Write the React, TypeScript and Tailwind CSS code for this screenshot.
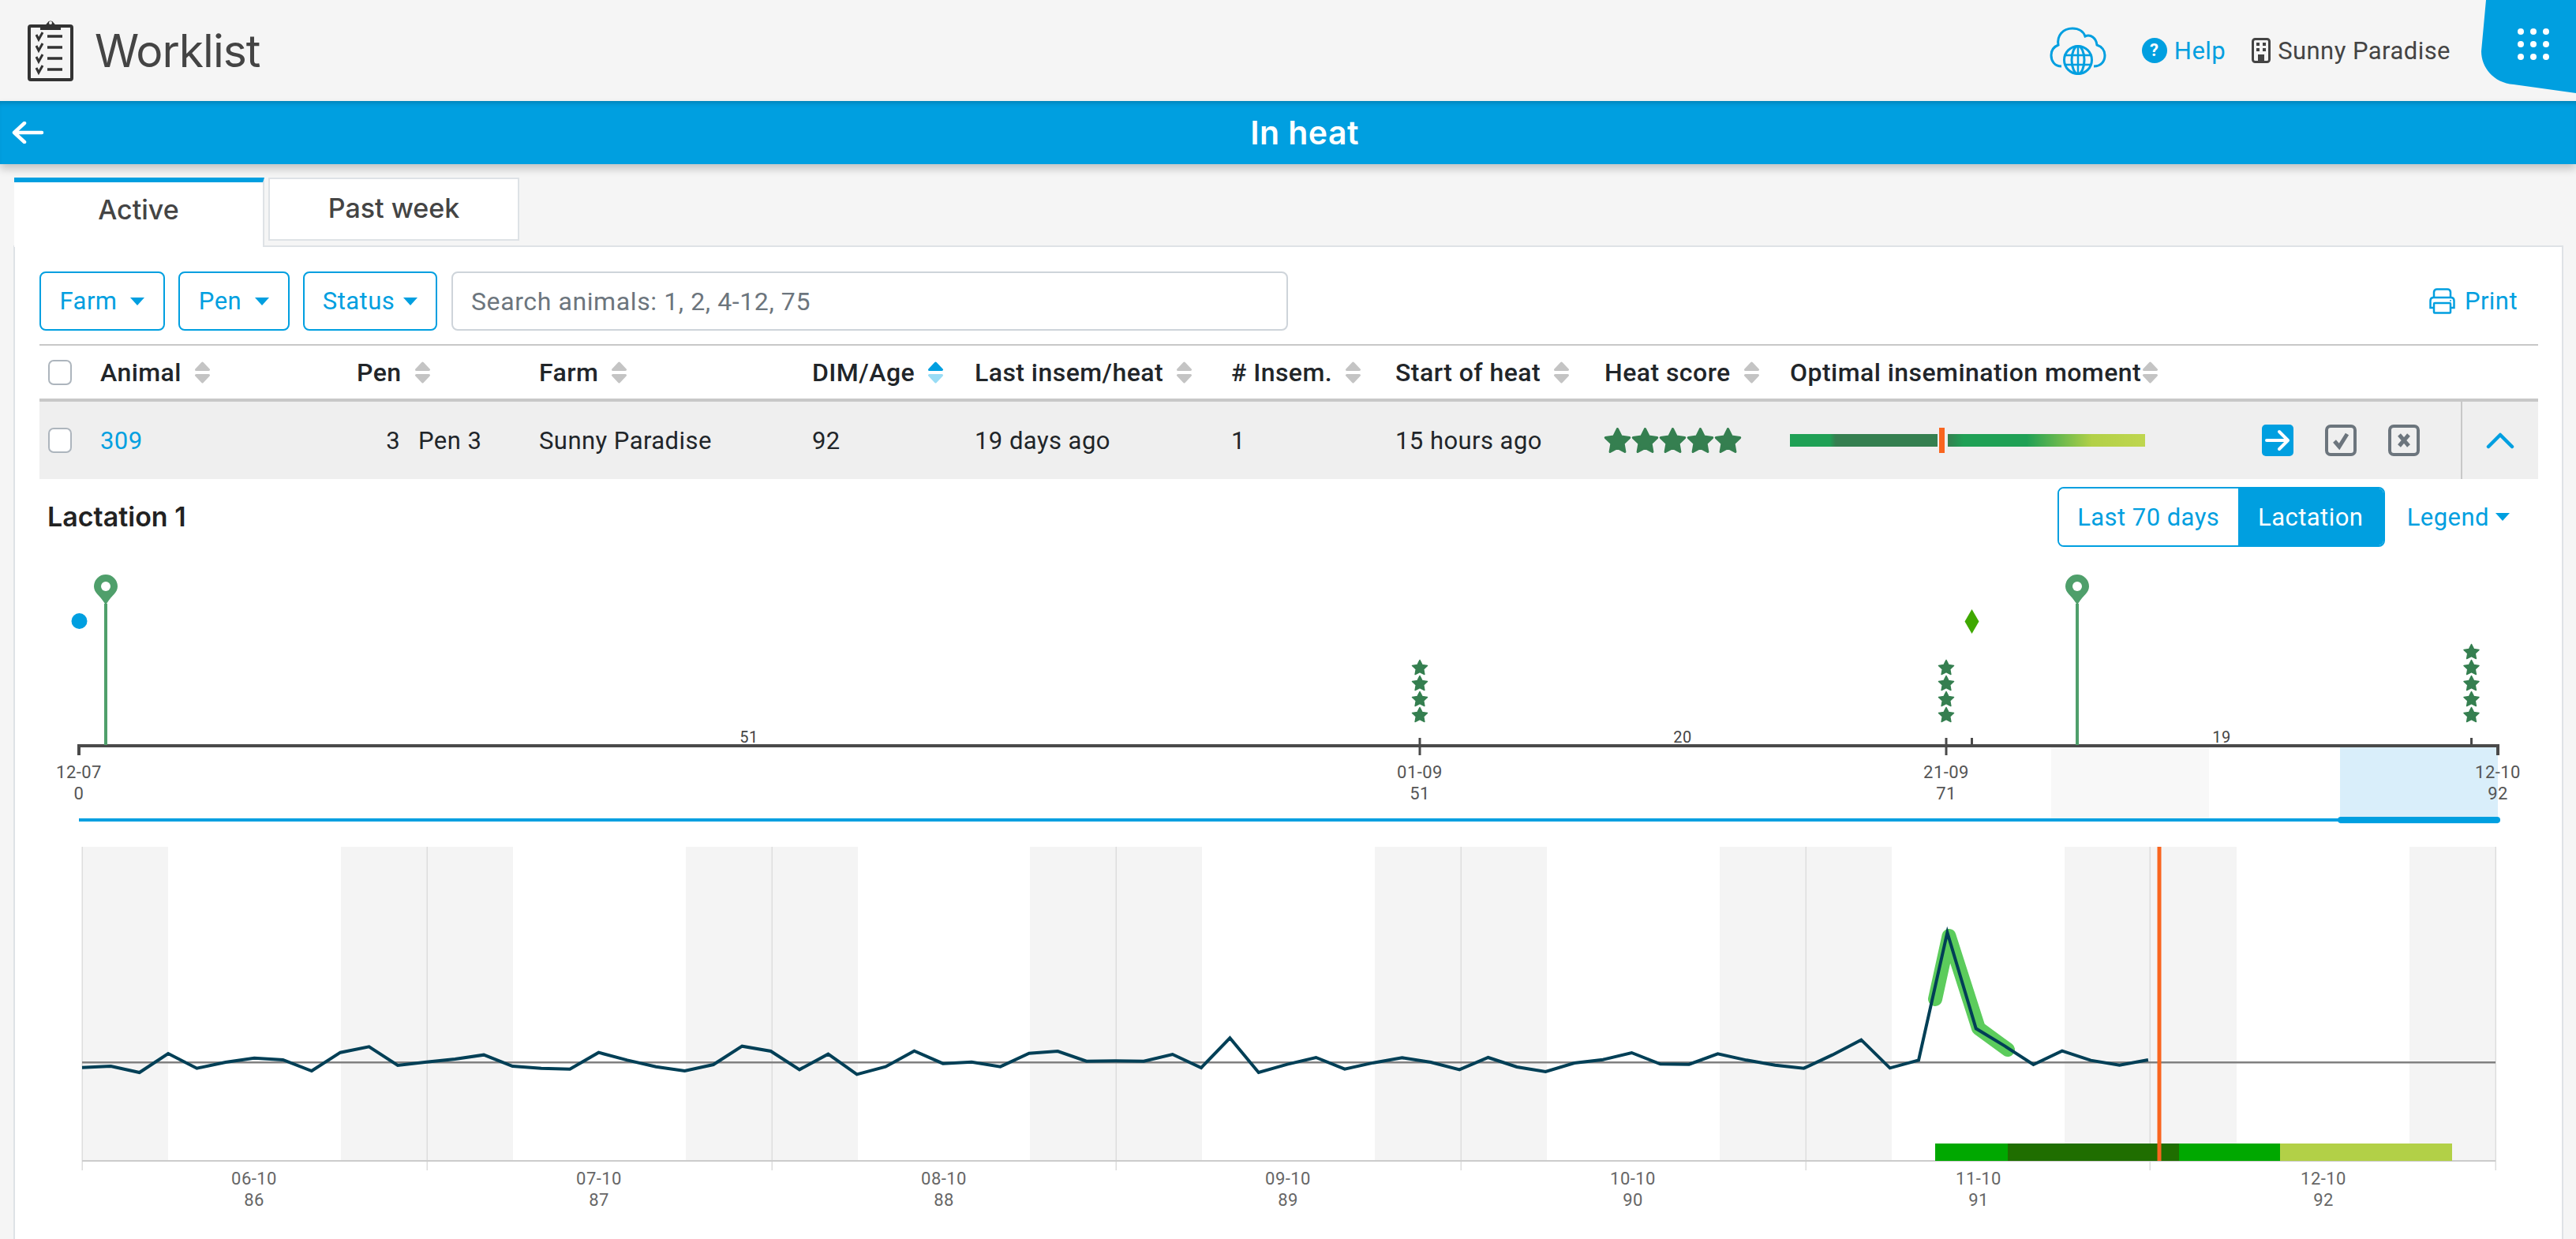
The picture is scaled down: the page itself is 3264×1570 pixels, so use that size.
const BLUE = "#009fe0";

// activity curve, one value per 2h, in page pixels
const curve = [
  878, 873, 897, 825, 881, 858, 842, 849, 891, 821, 799, 870, 857, 846, 830, 873, 881, 884, 821, 850, 875, 891, 867, 797,
  816, 886, 827, 904, 875, 815, 863, 857, 875, 824, 816, 854, 853, 854, 828, 879, 766, 897, 866, 840, 884, 860, 841, 858,
  886, 840, 876, 894, 861, 848, 822, 865, 866, 826, 850, 869, 881, 830, 773, 880, 850, 365, 730, 796, 867, 815, 851, 869,
  849,
].map((v, i) => `${104 + i * 36.36},${1060 + v / 3}`);

const dayLines = [104, 541, 978, 1414, 1851, 2288, 2724, 3162];
const nightBands = [
  [104, 213],
  [432, 650],
  [869, 1087],
  [1305, 1523],
  [1742, 1960],
  [2179, 2397],
  [2616, 2834],
  [3053, 3162],
];
const dayLabels = [
  ["06-10", "86", 322],
  ["07-10", "87", 759],
  ["08-10", "88", 1196],
  ["09-10", "89", 1632],
  ["10-10", "90", 2069],
  ["11-10", "91", 2507],
  ["12-10", "92", 2944],
] as const;

function starPoints(cx: number, cy: number, r: number) {
  const pts: string[] = [];
  for (let i = 0; i < 10; i++) {
    const rad = i % 2 === 0 ? r : r * 0.5;
    const a = -Math.PI / 2 + (i * Math.PI) / 5;
    pts.push(`${cx + rad * Math.cos(a)},${cy + rad * Math.sin(a)}`);
  }
  return pts.join(" ");
}

function StarColumn({ x, count }: { x: number; count: number }) {
  return (
    <>
      {Array.from({ length: count }).map((_, i) => (
        <polygon
          key={i}
          points={starPoints(x, 906.5 - i * 20, 10)}
          fill="#357f50"
          stroke="#357f50"
          strokeWidth="1.5"
          strokeLinejoin="round"
        />
      ))}
    </>
  );
}

function Pin({ x }: { x: number }) {
  return (
    <>
      <path
        d={`M${x} 767 C${x - 6} 755 ${x - 15} 752 ${x - 15} 743 A15 15 0 0 1 ${x + 15} 743 C${x + 15} 752 ${x + 6} 755 ${x} 767 Z`}
        fill="#4f9f6b"
      />
      <circle cx={x} cy="743" r="6" fill="white" />
      <rect x={x - 2} y="765" width="4" height="179" fill="#4f9f6b" />
    </>
  );
}

function SortIcon({ active }: { active?: boolean }) {
  return (
    <svg width="21" height="28" viewBox="0 0 21 28" className="shrink-0">
      <polygon
        points="10.5,2 18.5,10.5 2.5,10.5"
        fill={active ? BLUE : "#c4c4c4"}
        stroke={active ? BLUE : "#c4c4c4"}
        strokeWidth="3"
        strokeLinejoin="round"
      />
      <polygon
        points="2.5,17.5 18.5,17.5 10.5,26"
        fill={active ? "#99dcf5" : "#c4c4c4"}
        stroke={active ? "#99dcf5" : "#c4c4c4"}
        strokeWidth="3"
        strokeLinejoin="round"
      />
    </svg>
  );
}

function Caret() {
  return <span className="h-0 w-0 border-x-[9px] border-t-[10px] border-x-transparent border-t-[#009fe0]" />;
}

function Checkbox() {
  return <div className="ml-[11px] h-[32px] w-[30px] rounded-[7px] border-2 border-[#adb5bd] bg-white" />;
}

function HeaderCell({ label, gap = "gap-[16px]", active }: { label: string; gap?: string; active?: boolean }) {
  return (
    <div className={`flex items-center ${gap} text-[32px] font-medium text-[#212529]`}>
      <span>{label}</span>
      <SortIcon active={active} />
    </div>
  );
}

function FilterButton({ label, width, gap }: { label: string; width: string; gap: string }) {
  return (
    <button
      className={`flex h-full items-center justify-center ${width} ${gap} rounded-[8px] border-2 border-[#009fe0] bg-white text-[#009fe0]`}
    >
      {label}
      <Caret />
    </button>
  );
}

function ClipboardIcon() {
  return (
    <svg width="58" height="80" viewBox="0 0 58 80" className="shrink-0">
      <rect x="2" y="9" width="54" height="68" rx="2" fill="none" stroke="#333" strokeWidth="4" />
      <path d="M16 14 V9 H22 C23 7 24 6 25 5 A4.5 4.5 0 0 1 33 5 C34 6 35 7 36 9 H42 V14 Z" fill="#333" />
      <circle cx="29" cy="5" r="2" fill="#f5f5f5" />
      {[22, 36, 50, 64].map((y) => (
        <g key={y} fill="none" stroke="#333" strokeWidth="3">
          <path d={`M11 ${y - 2} L14 ${y + 4} L19 ${y - 5}`} />
          <path d={`M25 ${y} H44`} strokeWidth="3.5" />
        </g>
      ))}
    </svg>
  );
}

function CloudGlobe() {
  return (
    <svg width="72" height="61" viewBox="0 0 72 61" fill="none" stroke="#009fe0" strokeWidth="3">
      <path d="M15 50 C6 50 2 43 2 36 C2 29 6 25 11 23 C9 11 17 2 29 2 C37 2 43 6 45 12 C52 9 59 14 60 23 C66 25 70 30 70 36 C70 44 65 50 56 50" />
      <circle cx="36" cy="42" r="17.5" fill="#f5f5f5" />
      <ellipse cx="36" cy="42" rx="8" ry="17.5" />
      <path d="M36 24 V60 M19 36 H53 M19 48 H53" strokeWidth="2.5" />
    </svg>
  );
}

function BuildingIcon() {
  return (
    <svg width="24" height="32" viewBox="0 0 24 32">
      <rect x="1.5" y="1.5" width="21" height="29" rx="3" fill="none" stroke="#444" strokeWidth="3" />
      <path d="M6 6 H10 V10 H6 Z M14 6 H18 V10 H14 Z M6 13 H10 V17 H6 Z M14 13 H18 V17 H14 Z M8 21 H16 V30 H8 Z" fill="#444" />
    </svg>
  );
}

function PrinterIcon() {
  return (
    <svg width="33" height="33" viewBox="0 0 33 33" fill="none" stroke="#009fe0" strokeWidth="2.5">
      <path d="M6 12 V5 A4 4 0 0 1 10 1.5 H23 A4 4 0 0 1 27 5 V12" />
      <path d="M6 25 H1.5 V16 A4 4 0 0 1 5 12 H28 A4 4 0 0 1 31.5 16 V25 H27" />
      <rect x="6" y="19" width="21" height="12.5" rx="1" />
      <circle cx="27" cy="16" r="1" fill="#009fe0" stroke="none" />
    </svg>
  );
}

function ActionBox({ kind }: { kind: "go" | "check" | "close" }) {
  if (kind === "go") {
    return (
      <svg width="40" height="40" viewBox="0 0 40 40">
        <rect width="40" height="40" rx="5" fill="#009fe0" />
        <path d="M6 20 H32 M22 9 L33 20 L22 31" fill="none" stroke="white" strokeWidth="4" strokeLinecap="round" strokeLinejoin="round" />
      </svg>
    );
  }
  return (
    <svg width="40" height="40" viewBox="0 0 40 40">
      <rect x="2" y="2" width="36" height="36" rx="5" fill="none" stroke="#6c757d" strokeWidth="4" />
      {kind === "check" ? (
        <path d="M12 21 L18 28 L28 12" fill="none" stroke="#6c757d" strokeWidth="5" />
      ) : (
        <path d="M14 13 L26 27 M26 13 L14 27" fill="none" stroke="#6c757d" strokeWidth="5" />
      )}
    </svg>
  );
}

function RowStar() {
  return (
    <svg width="35" height="33" viewBox="0 0 35 33">
      <polygon
        points={starPoints(17.5, 17.5, 16)}
        fill="#357f50"
        stroke="#357f50"
        strokeWidth="3"
        strokeLinejoin="round"
      />
    </svg>
  );
}

function TimelineChart() {
  return (
    <svg width="3166" height="360" viewBox="50 700 3166 360" className="mt-[7px] block">
      <rect x="2599" y="947" width="200" height="90" fill="#f8f8f8" />
      <rect x="2965" y="947" width="200" height="97" fill="#d9eefa" />

      <rect x="98" y="943" width="3069" height="4" fill="#4a4a4a" />
      <rect x="98" y="943" width="4" height="14" fill="#4a4a4a" />
      <rect x="3163" y="943" width="4" height="14" fill="#4a4a4a" />
      {[1799, 2466].map((x) => (
        <rect key={x} x={x - 1.5} y="935" width="3" height="22" fill="#4a4a4a" />
      ))}
      {[2498.5, 3131.5].map((x) => (
        <rect key={x} x={x - 1.5} y="935" width="3" height="9" fill="#4a4a4a" />
      ))}

      <Pin x={134} />
      <Pin x={2632} />
      <circle cx="100.5" cy="787" r="10" fill="#009fe0" />
      <polygon points="2498.5,772 2507.5,787.5 2498.5,803 2489.5,787.5" fill="#3fa800" />
      <StarColumn x={1799} count={4} />
      <StarColumn x={2466} count={4} />
      <StarColumn x={3131.5} count={5} />

      <g className="fill-[#444] font-['Roboto',sans-serif] text-[20px]" textAnchor="middle">
        <text x="949" y="941">51</text>
        <text x="2132" y="941">20</text>
        <text x="2815" y="941">19</text>
      </g>
      <g className="fill-[#555] font-['Roboto',sans-serif] text-[22px]" textAnchor="middle">
        <text x="100" y="986">12-07</text>
        <text x="100" y="1013">0</text>
        <text x="1799" y="986">01-09</text>
        <text x="1799" y="1013">51</text>
        <text x="2466" y="986">21-09</text>
        <text x="2466" y="1013">71</text>
        <text x="3165" y="986">12-10</text>
        <text x="3165" y="1013">92</text>
      </g>

      <rect x="100" y="1037" width="2866" height="4" fill="#009fe0" />
      <rect x="2962" y="1035" width="206" height="8" rx="4" fill="#009fe0" />
    </svg>
  );
}

function ActivityChart() {
  return (
    <svg width="3166" height="480" viewBox="50 1060 3166 480" className="block">
      {nightBands.map(([a, b]) => (
        <rect key={a} x={a} y="1073" width={b - a} height="398" fill="#f4f4f4" />
      ))}
      {dayLines.map((x) => (
        <rect key={x} x={x - 0.5} y="1073" width="1.5" height="410" fill="#dddddd" />
      ))}
      <rect x="104" y="1470" width="3058" height="2" fill="#cccccc" />
      <rect x="104" y="1345" width="3058" height="2.5" fill="#808080" />

      <g>
        <rect x="2452" y="1449" width="92" height="22" fill="#00a800" />
        <rect x="2544" y="1449" width="217" height="22" fill="#1f6e00" />
        <rect x="2761" y="1449" width="128" height="22" fill="#00a800" />
        <rect x="2889" y="1449" width="218" height="22" fill="#b2d047" />
      </g>

      <polyline
        points="2452,1266 2469.5,1186 2507,1303 2544,1330"
        fill="none"
        stroke="#5ccc5c"
        strokeWidth="18"
        strokeLinecap="round"
        strokeLinejoin="round"
      />
      <polyline points={curve.join(" ")} fill="none" stroke="#003f56" strokeWidth="4" strokeLinejoin="miter" />
      <rect x="2733.5" y="1073" width="5" height="398" fill="#f9651f" />

      <g className="fill-[#666] font-['Roboto',sans-serif] text-[22px]" textAnchor="middle">
        {dayLabels.map(([date, dim, x]) => (
          <g key={date}>
            <text x={x} y="1501">{date}</text>
            <text x={x} y="1528">{dim}</text>
          </g>
        ))}
      </g>
    </svg>
  );
}

export default function App() {
  return (
    <div className="h-[1570px] w-[3264px] overflow-hidden bg-[#f5f5f5] font-['Roboto',sans-serif] text-[31px] leading-none tracking-[0.45px] text-[#212529]">
      <header className="relative flex h-[128px] items-center bg-[#f5f5f5] pl-[35px]">
        <ClipboardIcon />
        <h1 className="ml-[27px] font-['Inter',sans-serif] text-[57px] font-normal tracking-[-1px] text-[#444]">Worklist</h1>
        <div className="ml-auto mr-[159px] flex items-center">
          <CloudGlobe />
          <div className="ml-[45px] flex h-[32px] w-[32px] items-center justify-center rounded-full bg-[#009fe0] text-[22px] font-bold text-white">
            ?
          </div>
          <span className="ml-[9px] text-[#009fe0]">Help</span>
          <div className="ml-[33px]">
            <BuildingIcon />
          </div>
          <span className="ml-[9px] text-[#444]">Sunny Paradise</span>
        </div>
        <svg width="120" height="120" viewBox="0 0 120 120" className="absolute right-0 top-0">
          <path d="M6 0 L0 65 C0 85 15 105 41 107 L120 118 V0 Z" fill="#009fe0" />
          {[40, 56, 72].map((y) =>
            [50, 66, 82].map((x) => <circle key={`${x}-${y}`} cx={x} cy={y} r="4" fill="white" />),
          )}
        </svg>
      </header>

      <div className="relative z-10 flex h-[80px] items-center justify-center bg-[#009fe0] shadow-[inset_0_6px_6px_-4px_rgba(0,0,0,0.22),0_6px_10px_rgba(0,0,0,0.2)]">
        <svg width="42" height="28" viewBox="0 0 42 28" className="absolute left-[15px]">
          <path d="M38 14 H4 M16 2 L3 14 L16 26" fill="none" stroke="white" strokeWidth="4.5" strokeLinecap="round" strokeLinejoin="round" />
        </svg>
        <h2 className="ml-[42px] font-['Inter',sans-serif] text-[41px] font-semibold text-white">In heat</h2>
      </div>

      <main className="pl-[17px] pr-[16px] pt-[17px]">
        <div className="relative z-[1] flex items-start gap-[5px] pl-px">
          <div className="-mb-[2px] flex h-[88px] w-[317px] items-center justify-center border-r-2 border-t-[6px] border-r-[#dee2e6] border-t-[#009fe0] bg-white pb-[12px] font-['Inter',sans-serif] text-[34px] font-medium tracking-normal text-[#444]">
            Active
          </div>
          <div className="flex h-[80px] w-[318px] items-center justify-center border-2 border-[#dee2e6] bg-white pb-[2px] font-['Inter',sans-serif] text-[34px] font-medium tracking-normal text-[#444]">
            Past week
          </div>
        </div>

        <section className="h-[1300px] border-2 border-[#dee2e6] bg-white pl-[31px] pr-[30px] pt-[31px]">
          <div className="flex h-[75px] items-center">
            <FilterButton label="Farm" width="w-[159px]" gap="gap-[17px]" />
            <div className="ml-[17px] h-full">
              <FilterButton label="Pen" width="w-[141px]" gap="gap-[17px]" />
            </div>
            <div className="ml-[17px] h-full">
              <FilterButton label="Status" width="w-[170px]" gap="gap-[11px]" />
            </div>
            <input
              readOnly
              placeholder="Search animals: 1, 2, 4-12, 75"
              className="ml-[18px] h-full w-[1060px] rounded-[8px] border-2 border-[#ced4da] bg-white px-[23px] text-[32px] tracking-[0.6px] placeholder:text-[#6c757d]"
            />
            <div className="ml-auto mr-[26px] flex items-center gap-[12px] text-[#009fe0]">
              <PrinterIcon />
              Print
            </div>
          </div>

          <div className="mt-[17px] grid h-[73px] grid-cols-[77px_325px_231px_346px_206px_325px_208px_265px_235px_598px_252px_98px] items-center border-b-4 border-t-2 border-b-[#c8c8c8] border-t-[#c8c8c8]">
            <Checkbox />
            <HeaderCell label="Animal" />
            <HeaderCell label="Pen" />
            <HeaderCell label="Farm" />
            <HeaderCell label="DIM/Age" active />
            <HeaderCell label="Last insem/heat" />
            <HeaderCell label="# Insem." />
            <HeaderCell label="Start of heat" />
            <HeaderCell label="Heat score" />
            <HeaderCell label="Optimal insemination moment" gap="gap-px" />
          </div>

          <div className="grid h-[98px] grid-cols-[77px_325px_231px_346px_206px_325px_208px_265px_235px_598px_252px_98px] items-center bg-[#efefef]">
            <Checkbox />
            <span className="text-[#009fe0]">309</span>
            <div className="flex">
              <span className="w-[55px] text-right">3</span>
              <span className="ml-[23px]">Pen 3</span>
            </div>
            <span>Sunny Paradise</span>
            <span>92</span>
            <span>19 days ago</span>
            <span>1</span>
            <span>15 hours ago</span>
            <div className="-ml-px flex">
              <RowStar />
              <RowStar />
              <RowStar />
              <RowStar />
              <RowStar />
            </div>
            <div className="flex items-center">
              <div className="h-[16px] w-[187px] bg-[linear-gradient(90deg,#1fa055_0%,#1fa055_27%,#357f50_31%,#357f50_100%)]" />
              <div className="ml-[2px] h-[32px] w-[7px] bg-[#f9651f]" />
              <div className="ml-[4px] h-[16px] w-[250px] bg-[linear-gradient(90deg,#357f50_0%,#1fa055_8%,#1fa055_40%,#b2d047_73%,#bfd64f_100%)]" />
            </div>
            <div className="flex gap-[40px]">
              <ActionBox kind="go" />
              <ActionBox kind="check" />
              <ActionBox kind="close" />
            </div>
            <div className="flex h-full items-center justify-center border-l-2 border-l-[#c8c8c8]">
              <svg width="36" height="22" viewBox="0 0 36 22">
                <path d="M3 19 L18 4 L33 19" fill="none" stroke="#009fe0" strokeWidth="4.5" strokeLinecap="round" strokeLinejoin="round" />
              </svg>
            </div>
          </div>

          <div className="mt-[10px] flex h-[76px] items-center justify-between">
            <h3 className="ml-[10px] font-['Inter',sans-serif] text-[34px] font-semibold tracking-normal text-[#222]">Lactation 1</h3>
            <div className="flex h-full items-center">
              <div className="flex h-full overflow-hidden rounded-[8px] border-2 border-[#009fe0] text-[#009fe0]">
                <div className="flex w-[227px] items-center justify-center bg-white">Last 70 days</div>
                <div className="flex w-[184px] items-center justify-center bg-[#009fe0] text-white">Lactation</div>
              </div>
              <div className="ml-[28px] mr-[36px] flex items-center gap-[8px] text-[#009fe0]">
                Legend
                <Caret />
              </div>
            </div>
          </div>

          <TimelineChart />
          <ActivityChart />
        </section>
      </main>
    </div>
  );
}
